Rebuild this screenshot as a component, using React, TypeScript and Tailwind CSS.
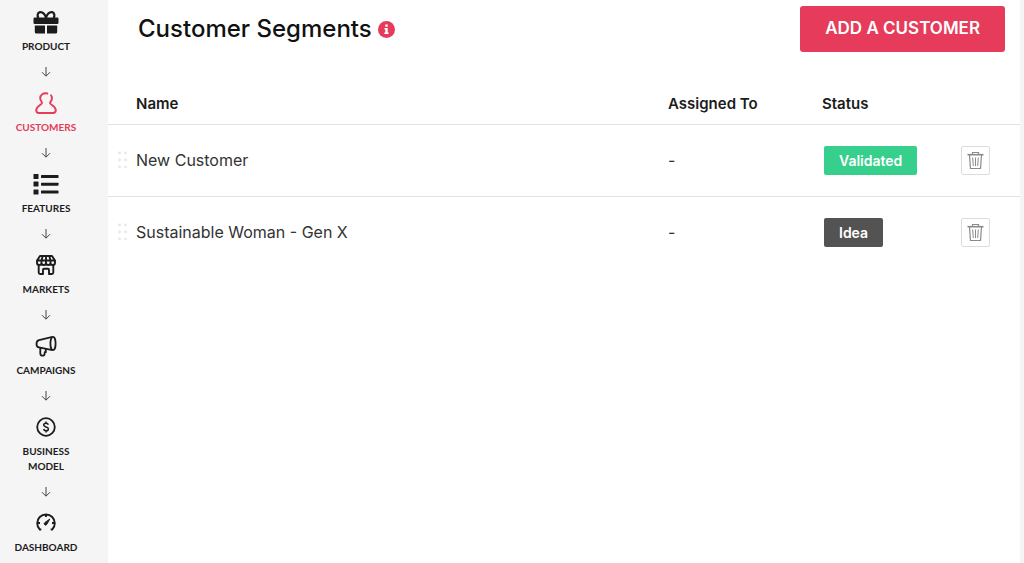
import type { ReactNode } from 'react';

type Step = { label: string; icon: ReactNode; active?: boolean };
type Segment = { name: string; assignedTo: string; status: 'Validated' | 'Idea' };

const GiftIcon = () => (
  <svg width="26" height="24" viewBox="0 0 26 24" aria-hidden="true">
    <path d="M13 7.500C11.500 3.500 9.500 1.900 7 2.200C4.300 2.600 4 6 5.500 8M13 7.500C14.500 3.500 16.500 1.900 19 2.200C21.700 2.600 22 6 20.500 8" fill="none" stroke="currentColor" strokeWidth="2.200" />
    <rect x="0.500" y="7.500" width="25" height="6.500" rx="1.200" fill="currentColor" />
    <path d="M1.800 15.500H12V23.500H3.300Q1.800 23.500 1.800 22ZM14 15.500H24.200V22Q24.200 23.500 22.700 23.500H14Z" fill="currentColor" />
  </svg>
);

const CustomerIcon = () => (
  <svg width="24" height="24" viewBox="0 0 24 24" fill="none" stroke="currentColor" strokeWidth="1.900" strokeLinecap="round" strokeLinejoin="round" aria-hidden="true">
    <path d="M13.300 2.500C9.300 1.600 6.200 4 6.200 7.300C6.200 9.900 8 10.800 8 12C8 13.800 2.200 15 2.200 19.300C2.200 21.200 3.300 22 5 22H19C20.700 22 21.800 21.200 21.800 19.300C21.800 15 16 13.800 16 12C16 10.800 18 9.900 18 7.300C18 6.100 17.600 5.100 17 4.300" />
  </svg>
);

const FeaturesIcon = () => (
  <svg width="26" height="24" viewBox="0 0 26 24" fill="currentColor" aria-hidden="true">
    <rect x="0.500" y="2" width="5" height="5" rx="0.600" />
    <rect x="0.500" y="9.500" width="5" height="5" rx="0.600" />
    <rect x="0.500" y="17.500" width="5" height="5" rx="0.600" />
    <rect x="8" y="3" width="17.500" height="3" rx="0.600" />
    <rect x="8" y="10.700" width="17.500" height="3" rx="0.600" />
    <rect x="8" y="18.500" width="17.500" height="3" rx="0.600" />
  </svg>
);

const MarketIcon = () => (
  <svg width="24" height="24" viewBox="0 0 24 24" fill="none" stroke="currentColor" strokeWidth="1.900" strokeLinejoin="round" aria-hidden="true">
    <path d="M6 3H18L21 7.500V9.800A2.200 2.200 0 0 1 16.500 9.800A2.200 2.200 0 0 1 12 9.800A2.200 2.200 0 0 1 7.500 9.800A2.200 2.200 0 0 1 3 9.800V7.500ZM3 7.500H21M8.700 3L7.500 7.500V10M12 3V10M15.300 3L16.500 7.500V10" />
    <path d="M4.700 12V19.500Q4.700 21 6.200 21H9V16.800Q9 15.800 10 15.800H14Q15 15.800 15 16.800V21H17.800Q19.300 21 19.300 19.500V12" />
  </svg>
);

const MegaphoneIcon = () => (
  <svg width="24" height="24" viewBox="0 0 24 24" fill="none" stroke="currentColor" strokeWidth="1.800" strokeLinejoin="round" aria-hidden="true">
    <ellipse cx="19" cy="9.500" rx="2.600" ry="6.700" />
    <path d="M18.500 2.900L5 6.100C3.300 6.500 2.500 7.700 2.500 10C2.500 12.300 3.300 13.300 5 13.400L18.500 16.200" />
    <path d="M6.300 13.700V19.200Q6.300 21.700 8.500 21.700Q10.700 21.700 10.700 19.200V18.200H11.800V14.900" />
  </svg>
);

const DollarIcon = () => (
  <svg width="24" height="24" viewBox="0 0 24 24" fill="none" stroke="currentColor" strokeWidth="1.800" aria-hidden="true">
    <circle cx="12" cy="12" r="8.800" />
    <path d="M14.300 9.800C14 8.700 13.200 8.300 12 8.300C10.600 8.300 9.700 9 9.700 10.100C9.700 12.600 14.400 11.300 14.400 13.900C14.400 15 13.400 15.700 12 15.700C10.600 15.700 9.800 15.100 9.600 14M12 6.500V8.300M12 15.700V17.500" strokeWidth="1.500" />
  </svg>
);

const GaugeIcon = () => (
  <svg width="24" height="24" viewBox="0 0 24 24" fill="none" stroke="currentColor" strokeWidth="1.900" strokeLinejoin="round" aria-hidden="true">
    <path d="M7.300 18.500H5.800A8.800 8.800 0 1 1 18.200 18.500H16.700M12 3V6M3.500 12H6M18 12H20.500" />
    <path d="M15.800 8L12.900 13.300A1.400 1.400 0 1 1 10.900 11.500Z" fill="currentColor" strokeWidth="0.900" />
  </svg>
);

const DownArrow = () => (
  <svg width="10" height="10" viewBox="0 0 10 10" fill="none" stroke="currentColor" strokeWidth="1" className="mt-[13px] mb-[14px] text-[#444]" aria-hidden="true">
    <path d="M5 0V9M1 5.200L5 9.200L9 5.200" />
  </svg>
);

const InfoIcon = () => (
  <svg width="17" height="17" viewBox="0 0 17 17" aria-hidden="true">
    <circle cx="8.500" cy="8.500" r="8.500" fill="#e63b5a" />
    <path d="M7.300 3.600H9.700V5.800H7.300ZM6.500 7H9.700V11.500H10.600V13H6.400V11.500H7.300V8.500H6.500Z" fill="white" />
  </svg>
);

const TrashIcon = () => (
  <svg width="17" height="19" viewBox="0 0 17 19" fill="none" stroke="currentColor" aria-hidden="true">
    <path d="M5.500 3.500V1.500H11.500V3.500M2.500 4L3.500 17.500H13.500L14.500 4" strokeWidth="1.200" />
    <path d="M0.500 3.700H16.500" strokeWidth="1.600" />
    <path d="M5.700 6.500L6.300 15M8.500 6.500V15M11.300 6.500L10.700 15" />
  </svg>
);

const DragDots = () => (
  <svg width="10" height="18" viewBox="0 0 10 18" fill="#e8e8e8" className="ml-auto" aria-hidden="true">
    <circle cx="1.500" cy="2" r="1.400" />
    <circle cx="7.500" cy="2" r="1.400" />
    <circle cx="1.500" cy="9" r="1.400" />
    <circle cx="7.500" cy="9" r="1.400" />
    <circle cx="1.500" cy="16" r="1.400" />
    <circle cx="7.500" cy="16" r="1.400" />
  </svg>
);

const steps: Step[] = [
  { label: 'PRODUCT', icon: <GiftIcon /> },
  { label: 'CUSTOMERS', icon: <CustomerIcon />, active: true },
  { label: 'FEATURES', icon: <FeaturesIcon /> },
  { label: 'MARKETS', icon: <MarketIcon /> },
  { label: 'CAMPAIGNS', icon: <MegaphoneIcon /> },
  { label: 'BUSINESS MODEL', icon: <DollarIcon /> },
  { label: 'DASHBOARD', icon: <GaugeIcon /> },
];

const segments: Segment[] = [
  { name: 'New Customer', assignedTo: '-', status: 'Validated' },
  { name: 'Sustainable Woman - Gen X', assignedTo: '-', status: 'Idea' },
];

export default function App() {
  return (
    <div className="flex min-h-screen bg-[#f5f5f5] pr-1 font-['Inter',sans-serif] text-[#1c1c1c]">
      <nav aria-label="Steps" className="w-27 shrink-0 pt-[10px] pr-4 font-['Lato',sans-serif]">
        <ol className="flex flex-col items-center">
          {steps.map((step, i) => (
            <li key={step.label} className="flex flex-col items-center">
              <a
                href="#"
                aria-current={step.active ? 'page' : undefined}
                className={`flex w-20 flex-col items-center gap-[5px] text-center text-[10px] leading-[15px] font-bold ${step.active ? 'text-[#e63b5a]' : 'text-[#1c1c1c]'}`}
              >
                {step.icon}
                {step.label}
              </a>
              {i < steps.length - 1 && <DownArrow />}
            </li>
          ))}
        </ol>
      </nav>

      <main className="min-w-0 flex-1 bg-white">
        <header className="flex items-center justify-between pt-[6px] pr-[15px] pl-[30px]">
          <div className="flex items-center gap-[6px]">
            <h1 className="text-2xl font-medium text-[#111]">Customer Segments</h1>
            <button type="button" aria-label="About customer segments">
              <InfoIcon />
            </button>
          </div>
          <button type="button" className="h-[46px] rounded-[3px] bg-[#e63b5a] px-[25px] text-[17px] font-semibold text-white">
            ADD A CUSTOMER
          </button>
        </header>

        <table className="mt-8 w-full table-fixed border-collapse text-left">
          <colgroup>
            <col className="w-7" />
            <col />
            <col className="w-[154px]" />
            <col className="w-[139px]" />
            <col className="w-[59px]" />
          </colgroup>
          <thead>
            <tr className="h-10 border-b border-[#e2e2e2] text-[15px] font-semibold">
              <td />
              <th scope="col" className="font-semibold">Name</th>
              <th scope="col" className="font-semibold">Assigned To</th>
              <th scope="col" className="font-semibold">Status</th>
              <td />
            </tr>
          </thead>
          <tbody>
            {segments.map((segment) => (
              <tr key={segment.name} className="h-[72px] border-b border-[#e2e2e2] text-base text-[#333] last:border-b-0">
                <td className="pr-2">
                  <DragDots />
                </td>
                <td>{segment.name}</td>
                <td>{segment.assignedTo}</td>
                <td className="pl-[2px]">
                  <span
                    className={`inline-block rounded-[2px] px-[15px] align-middle text-sm leading-[29px] font-semibold text-white ${segment.status === 'Validated' ? 'bg-[#36d08c]' : 'bg-[#535353]'}`}
                  >
                    {segment.status}
                  </span>
                </td>
                <td>
                  <button
                    type="button"
                    aria-label={`Delete ${segment.name}`}
                    className="flex size-[29px] items-center justify-center rounded-[2px] border border-[#dcdcdc] text-[#8a8a8a]"
                  >
                    <TrashIcon />
                  </button>
                </td>
              </tr>
            ))}
          </tbody>
        </table>
      </main>
    </div>
  );
}
